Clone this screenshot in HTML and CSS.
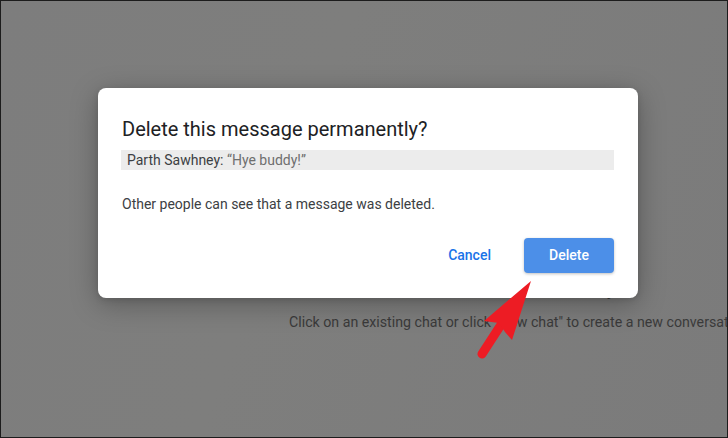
FILE: index.html
```html
<!DOCTYPE html>
<html>
<head>
<meta charset="utf-8">
<link rel="stylesheet" href="styles.css">
</head>
<body>
<div class="screen">
  <div class="backdrop-content">
    <div class="empty-title">No conversation selected yet</div>
    <div class="empty-hint">Click on an existing chat or click "New chat" to create a new conversation</div>
  </div>
  <div class="modal-layer">
    <div class="dialog">
      <h1 class="dialog-title">Delete this message permanently?</h1>
      <div class="quote"><span class="quote-author">Parth Sawhney:</span> <span class="quote-text">“Hye buddy!”</span></div>
      <p class="dialog-body">Other people can see that a message was deleted.</p>
      <div class="dialog-actions">
        <button class="btn-text">Cancel</button>
        <button class="btn-primary">Delete</button>
      </div>
    </div>
  </div>
  <svg class="annotation" width="728" height="438" viewBox="0 0 728 438">
    <line x1="482" y1="354" x2="506" y2="317" stroke="#ed1c24" stroke-width="9" stroke-linecap="round"/>
    <polygon points="531,281 484,321 499,323 505,332 512,340" fill="#ed1c24"/>
  </svg>
</div>
</body>
</html>
```

FILE: styles.css
```css
* { box-sizing: border-box; }
html, body { margin: 0; padding: 0; }
body { font-family: Roboto, "Noto Sans", Arial, sans-serif; }

.screen {
  position: relative;
  width: 728px;
  height: 438px;
  border: 1px solid #1c1c1c;
  background: linear-gradient(110deg, #7d7d7d 0%, #7e7e7d 40%, #7b7b7b 100%);
  overflow: hidden;
}

.backdrop-content {
  display: flex;
  flex-direction: column;
  align-items: flex-start;
  padding-top: 277px;
  padding-left: 288px;
}

.empty-title {
  font-size: 18px;
  line-height: 22px;
  color: #3b3b3b;
  padding-left: 110px;
}

.empty-hint {
  margin-top: 13px;
  font-size: 14.2px;
  line-height: 18px;
  color: #3a3a3a;
  white-space: nowrap;
}

.modal-layer {
  position: absolute;
  inset: 0;
  padding: 87px 0 0 97px;
}

.dialog {
  width: 540px;
  height: 210px;
  background: #ffffff;
  border-radius: 8px;
  box-shadow: 0 6px 28px rgba(0, 0, 0, 0.28), 0 2px 6px rgba(0, 0, 0, 0.12);
  padding: 27px 24px 25px 24px;
  display: flex;
  flex-direction: column;
}

.dialog-title {
  margin: 0;
  font-size: 20px;
  line-height: 28px;
  font-weight: 400;
  color: #202124;
}

.quote {
  margin-top: 7px;
  margin-left: -1px;
  height: 20px;
  line-height: 20px;
  background: #ececec;
  padding-left: 6px;
  font-size: 14px;
  white-space: nowrap;
}

.quote-author { color: #3c4043; }
.quote-text { color: #6f6f6f; }

.dialog-body {
  margin: 24px 0 0 0;
  font-size: 14px;
  line-height: 20px;
  color: #3c4043;
}

.dialog-actions {
  margin-top: auto;
  display: flex;
  justify-content: flex-end;
  align-items: center;
  gap: 21px;
}

.btn-text {
  border: none;
  background: none;
  font-family: Roboto, Arial, sans-serif;
  font-size: 14px;
  font-weight: 500;
  color: #1a73e8;
  padding: 0 12px 1px;
  height: 35px;
}

.btn-primary {
  border: none;
  width: 90px;
  height: 35px;
  border-radius: 4px;
  background: #4c8fe8;
  color: #ffffff;
  font-family: Roboto, Arial, sans-serif;
  font-size: 14px;
  font-weight: 500;
  padding: 0 0 1px;
  box-shadow: 0 1px 3px rgba(0, 0, 0, 0.25);
}

.annotation {
  position: absolute;
  left: -1px;
  top: -1px;
}
```
